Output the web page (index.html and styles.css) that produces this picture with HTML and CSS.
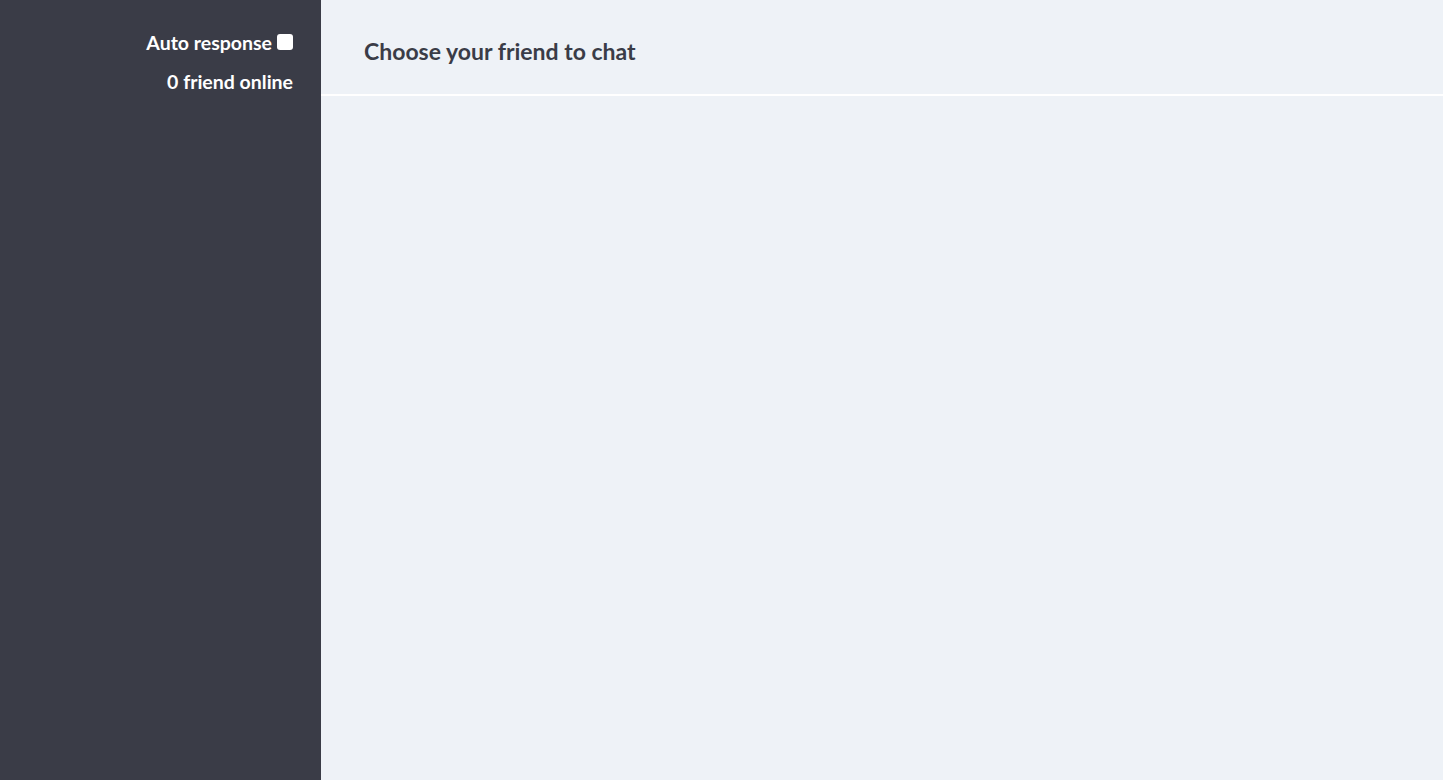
FILE: index.html
```html
<!DOCTYPE html>
<html>
<head>
<meta charset="utf-8">
<link rel="stylesheet" href="styles.css">
</head>
<body>
<div class="app">
  <aside class="sidebar">
    <label class="auto">Auto response <input type="checkbox" class="check"></label>
    <div class="online">0 friend online</div>
  </aside>
  <main class="main">
    <header class="header">Choose your friend to chat</header>
  </main>
</div>
</body>
</html>
```
FILE: styles.css
```css
html, body { margin: 0; padding: 0; height: 100%; }
body { font-family: Lato, "Noto Sans", sans-serif; }
.app { display: flex; height: 780px; }
.sidebar {
  width: 321px;
  background: #3a3c47;
  color: #fff;
  display: flex;
  flex-direction: column;
  align-items: flex-end;
  padding: 30px 28px 0 0;
  box-sizing: border-box;
  font-weight: 700;
  font-size: 19.5px;
}
.auto { display: flex; align-items: center; gap: 5px; height: 24px; }
.check {
  appearance: none;
  width: 16px; height: 16px; margin: 0;
  background: #fff; border-radius: 3px;
}
.online { margin-top: 16px; line-height: 24px; }
.main { flex: 1; background: #eef2f7; }
.header {
  height: 96px;
  box-sizing: border-box;
  border-bottom: 2px solid #fff;
  padding: 8px 0 0 43px;
  display: flex;
  align-items: center;
  font-weight: 700;
  font-size: 23px;
  color: #3a3c47;
}
```
